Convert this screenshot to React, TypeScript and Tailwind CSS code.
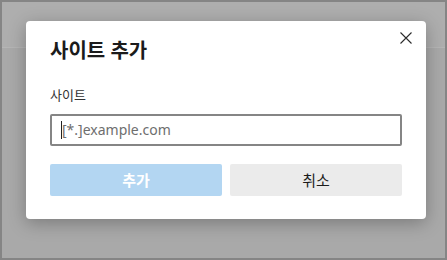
const font = { fontFamily: '"Noto Sans", "Noto Sans CJK KR", sans-serif' };

function AddSiteDialog() {
  return (
    <div
      role="dialog"
      aria-labelledby="add-site-title"
      className="absolute left-[24px] top-[19px] w-[400px] rounded-[4px] bg-white px-[24px] pt-[16px] pb-[23px] shadow-[0_4px_18px_rgba(0,0,0,0.28)]"
    >
      <button
        aria-label="닫기"
        className="absolute right-[14px] top-[11px] flex h-[12px] w-[12px] items-center justify-center text-[#2b2b2b]"
      >
        <svg width="12" height="12" viewBox="0 0 12 12" fill="none">
          <path d="M0.5 0.5L11.5 11.5M11.5 0.5L0.5 11.5" stroke="currentColor" strokeWidth="1.1" />
        </svg>
      </button>

      <h2
        id="add-site-title"
        className="text-[20px] font-bold leading-[28px] text-[#1b1b1b]"
      >
        사이트 추가
      </h2>

      <label className="mt-[21px] block text-[13px] leading-[18px] text-[#333]">
        사이트
      </label>

      {/* Input (focused, with caret) */}
      <div className="mt-[10px] flex h-[32px] w-[352px] items-center rounded-[2px] border-2 border-[#858585] pl-[9px]">
        <span className="h-[18px] w-px bg-[#222]" />
        <span className="text-[14px] leading-[18px] text-[#6e6e6e]">
          [*.]example.com
        </span>
      </div>

      <div className="mt-[18px] flex gap-[8px]">
        <button className="h-[32px] w-[172px] rounded-[2px] bg-[#b3d6f2] text-[15px] font-bold text-white">
          추가
        </button>
        <button className="h-[32px] w-[172px] rounded-[2px] bg-[#ebebeb] text-[15px] text-[#1b1b1b]">
          취소
        </button>
      </div>
    </div>
  );
}

export default function App() {
  return (
    <div
      style={font}
      className="relative flex h-[260px] w-[447px] flex-col overflow-hidden border-2 border-[#858585] bg-[#a9a9a9]"
    >
      <div className="h-[46px] shrink-0 border-b border-[#b5b5b5] bg-[#aeaeae]" />
      <div className="flex-1" />
      <AddSiteDialog />
    </div>
  );
}
